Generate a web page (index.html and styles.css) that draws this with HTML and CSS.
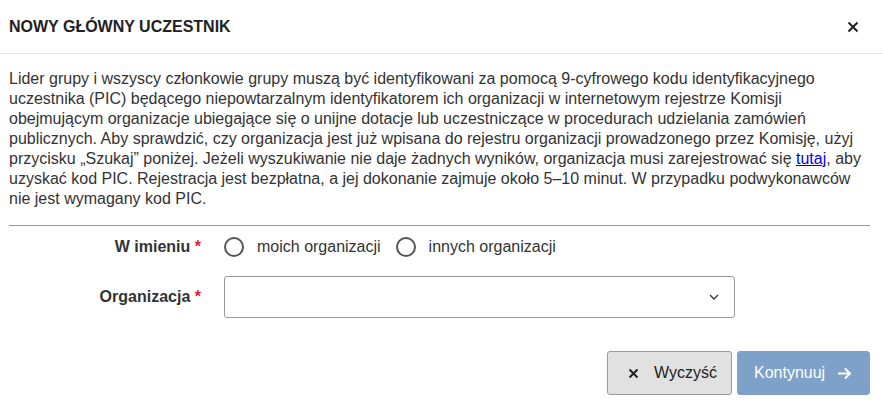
FILE: index.html
```html
<!DOCTYPE html>
<html lang="pl">
<head>
    <meta charset="UTF-8">
    <meta name="viewport" content="width=device-width, initial-scale=1.0">
    <title>Nowy główny uczestnik</title>
    <link rel="stylesheet" href="styles.css">
</head>
<body>
<div class="modal">
    <div class="modal-head row-box">
        <div class="modal-title flex1">NOWY GŁÓWNY UCZESTNIK</div>
        <span class="close-btn">
            <svg width="12" height="12" viewBox="0 0 12 12"><path d="M1.5 1.5 L10.5 10.5 M10.5 1.5 L1.5 10.5" stroke="#222" stroke-width="2" fill="none"/></svg>
        </span>
    </div>

    <div class="modal-body">
        <p class="intro">Lider grupy i wszyscy członkowie grupy muszą być identyfikowani za pomocą 9-cyfrowego kodu identyfikacyjnego uczestnika (PIC) będącego niepowtarzalnym identyfikatorem ich organizacji w internetowym rejestrze Komisji obejmującym organizacje ubiegające się o unijne dotacje lub uczestniczące w procedurach udzielania zamówień publicznych. Aby sprawdzić, czy organizacja jest już wpisana do rejestru organizacji prowadzonego przez Komisję, użyj przycisku „Szukaj” poniżej. Jeżeli wyszukiwanie nie daje żadnych wyników, organizacja musi zarejestrować się <a href="#">tutaj</a>, aby uzyskać kod PIC. Rejestracja jest bezpłatna, a jej dokonanie zajmuje około 5–10 minut. W przypadku podwykonawców nie jest wymagany kod PIC.</p>

        <div class="form-grid">
            <label class="form-label">W imieniu <span class="req">*</span></label>
            <div class="radio-group row-box">
                <label class="radio"><span class="radio-dot"></span>moich organizacji</label>
                <label class="radio"><span class="radio-dot"></span>innych organizacji</label>
            </div>

            <label class="form-label">Organizacja <span class="req">*</span></label>
            <div class="select-box row-box">
                <span class="flex1"></span>
                <svg width="10" height="6" viewBox="0 0 10 6"><path d="M1 1 L5 5 L9 1" stroke="#333" stroke-width="1.3" fill="none"/></svg>
            </div>
        </div>

        <div class="actions row-box">
            <button class="btn btn-clear">
                <svg class="btn-icon" width="11" height="11" viewBox="0 0 11 11"><path d="M1.5 1.5 L9.5 9.5 M9.5 1.5 L1.5 9.5" stroke="#222" stroke-width="2" fill="none"/></svg>
                Wyczyść
            </button>
            <button class="btn btn-next" disabled>
                Kontynuuj
                <svg class="btn-icon" width="15" height="13" viewBox="0 0 15 13"><path d="M1 6.5 H13 M8 1.5 L13 6.5 L8 11.5" stroke="#fff" stroke-width="2" fill="none"/></svg>
            </button>
        </div>
    </div>
</div>
</body>
</html>
```

FILE: styles.css
```css
body{margin:0;background:#fff;font-family:"Liberation Sans",Arial,sans-serif;color:#333;}
.row-box{display:flex;flex-direction:row;flex-wrap:nowrap;align-items:center;}
.flex1{flex:1 1 auto;}

.modal{width:883px;height:409px;background:#fff;}
.modal-head{height:53px;padding:0 24px 0 9px;border-bottom:1px solid #e2e2e2;}
.modal-title{font-size:16px;font-weight:bold;color:#222;padding-top:1px;}
.close-btn{display:flex;padding-top:1px;}

.modal-body{padding:15px 13px 0 9px;}
.intro{margin:0;font-size:16px;line-height:20px;color:#333;padding-bottom:16px;border-bottom:1px solid #999;}
.intro a{color:#0000ee;}

.form-grid{display:grid;grid-template-columns:192px 511px;column-gap:23px;row-gap:17px;align-items:center;margin-top:9px;}
.form-label{text-align:right;font-size:16px;font-weight:bold;color:#333;}
.req{color:#d9263c;}

.radio-group{height:24px;font-size:16px;}
.radio{display:flex;align-items:center;margin-right:15px;color:#333;}
.radio-dot{width:16px;height:16px;border:2px solid #555;border-radius:50%;margin-right:13px;}

.select-box{height:40px;border:1px solid #999;border-radius:3px;padding:0 15px 0 12px;}

.actions{justify-content:flex-end;margin-top:33px;gap:5px;}
.btn{height:44px;font-family:"Liberation Sans",Arial,sans-serif;font-size:16px;border-radius:3px;display:flex;align-items:center;padding:0 16px;}
.btn-icon{flex-shrink:0;}
.btn-clear{width:125px;background:#e1e1e1;border:1px solid #9a9a9a;color:#222;padding-left:20px;gap:15px;}
.btn-next{width:133px;background:#7da1c9;border:1px solid #7da1c9;color:#fff;padding-left:16px;gap:12px;}
```
